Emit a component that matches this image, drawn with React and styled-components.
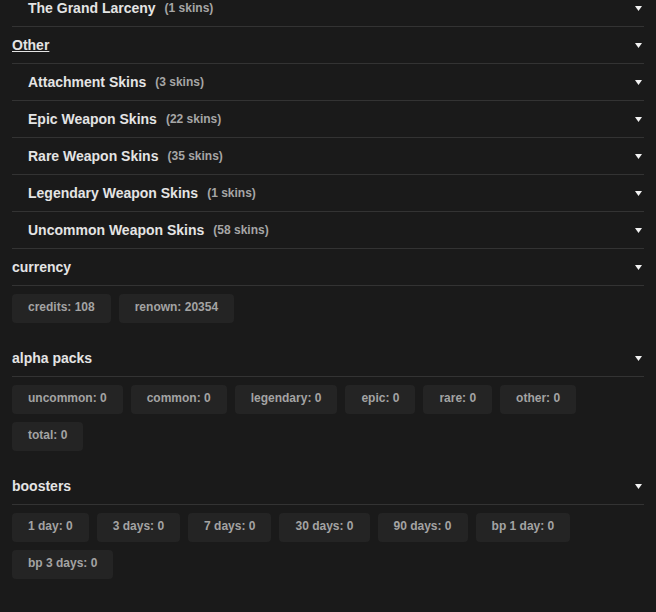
import React from 'react';
import styled, {createGlobalStyle} from "styled-components";

const GlobalStyle = createGlobalStyle`
  html, body {
    margin: 0;
    background: #1a1a1a;
    font-family: "Liberation Sans", Arial, sans-serif;
  }
`

const Page = styled.div`
  padding: 0 12px;
  margin-top: -10px;
  height: 622px;
  overflow: hidden;
  background: #1a1a1a;
`

const Row = styled.div`
  box-sizing: border-box;
  height: 37px;
  display: flex;
  align-items: center;
  padding: 0 2px 0 ${p => p.$indent ? '16px' : '0'};
  border-bottom: 1px solid #333333;
  cursor: pointer;
`

const Title = styled.span`
  color: #e4e4e4;
  font-size: 14px;
  font-weight: bold;
  text-decoration: ${p => p.$underline ? 'underline' : 'none'};
`

const Count = styled.span`
  color: #a6a6a6;
  font-size: 12px;
  font-weight: bold;
  margin-left: 9px;
`

const Arrow = styled.svg`
  margin-left: auto;
  width: 7px;
  height: 5px;
`

const ChipGrid = styled.div`
  display: flex;
  flex-wrap: wrap;
  gap: 8px;
  padding: 8px 0 17px;
`

const Chip = styled.div`
  background: #242424;
  color: #a3a3a3;
  font-size: 12px;
  font-weight: bold;
  line-height: 13px;
  padding: 7px 16px 9px;
  border-radius: 4px;
`

const Caret = () => (
    <Arrow viewBox="0 0 7 5">
        <path d="M0 0 H7 L3.5 5 Z" fill="#f2f2f2"/>
    </Arrow>
);

const HeaderRow = ({title, count, indent, underline}) => (
    <Row $indent={indent}>
        <Title $underline={underline}>{title}</Title>
        {count !== undefined && <Count>({count} skins)</Count>}
        <Caret/>
    </Row>
);

const otherSkins = [
    ['Attachment Skins', 3],
    ['Epic Weapon Skins', 22],
    ['Rare Weapon Skins', 35],
    ['Legendary Weapon Skins', 1],
    ['Uncommon Weapon Skins', 58],
];

const stats = [
    {title: 'currency', items: ['credits: 108', 'renown: 20354']},
    {
        title: 'alpha packs',
        items: ['uncommon: 0', 'common: 0', 'legendary: 0', 'epic: 0', 'rare: 0', 'other: 0', 'total: 0']
    },
    {
        title: 'boosters',
        items: ['1 day: 0', '3 days: 0', '7 days: 0', '30 days: 0', '90 days: 0', 'bp 1 day: 0', 'bp 3 days: 0']
    },
];

const App = () => {
    return (
        <>
            <GlobalStyle/>
            <Page>
                <HeaderRow title="The Grand Larceny" count={1} indent/>
                <HeaderRow title="Other" underline/>
                {otherSkins.map(([name, n]) => (
                    <HeaderRow key={name} title={name} count={n} indent/>
                ))}
                {stats.map(section => (
                    <div key={section.title}>
                        <HeaderRow title={section.title}/>
                        <ChipGrid>
                            {section.items.map(item => <Chip key={item}>{item}</Chip>)}
                        </ChipGrid>
                    </div>
                ))}
            </Page>
        </>
    );
};

export default App;
